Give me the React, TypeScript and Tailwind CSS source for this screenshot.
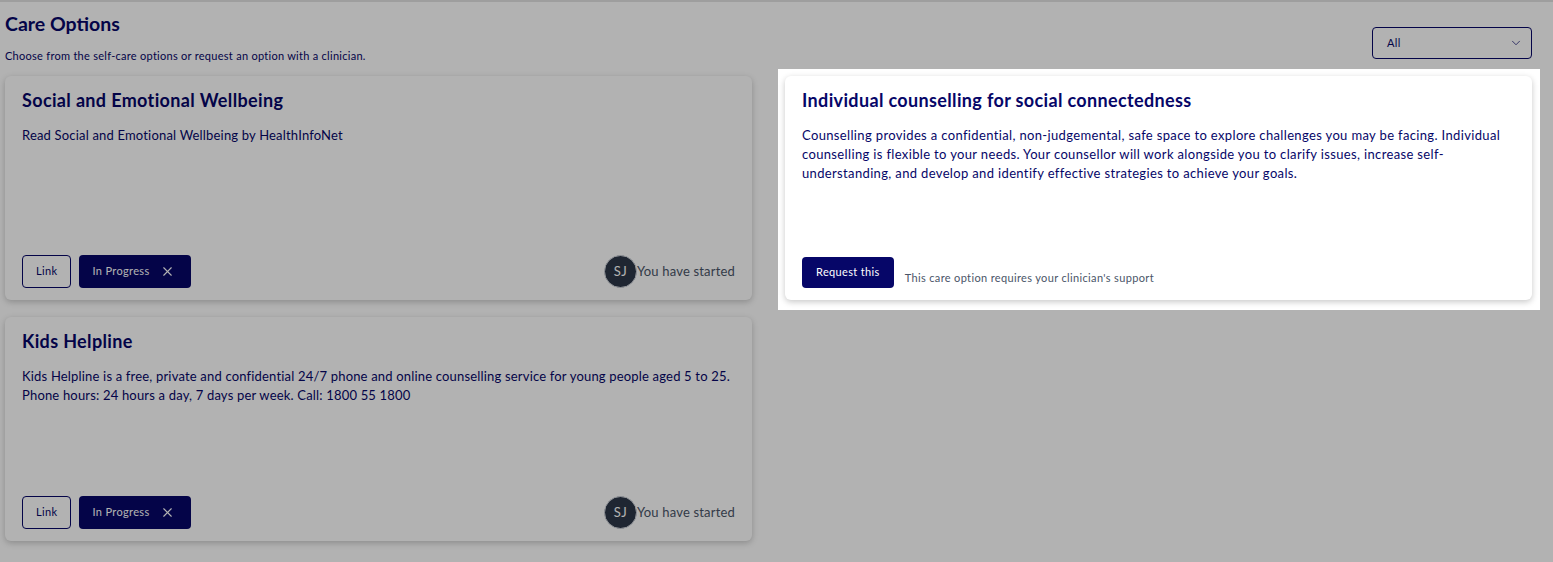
import { X, ChevronDown } from "lucide-react";

const NAVY = "text-[#060668]";

const StartedCard = ({ title, body }: { title: string; body: string[] }) => {
  return (
    <div className="bg-white rounded-md shadow-[0_2px_6px_rgba(0,0,0,0.22)] h-[224px] flex flex-col px-[17px] pt-[12px] pb-[12px]">
      <h2 className={`text-[18px] leading-[24px] font-bold ${NAVY}`}>{title}</h2>
      <div className={`mt-[14px] text-[13px] leading-[19px] tracking-[0.014em] ${NAVY}`}>
        {body.map((line) => (
          <p key={line}>{line}</p>
        ))}
      </div>
      <div className="mt-auto flex items-center justify-between">
        <div className="flex items-center gap-[8px]">
          <button className={`h-[33px] px-[13px] border border-[#060668] rounded text-[11px] ${NAVY}`}>
            Link
          </button>
          <button className="h-[33px] pl-[13px] pr-[16px] bg-[#060668] rounded text-[11px] text-white flex items-center gap-[10px]">
            In Progress
            <X size={15} strokeWidth={1.8} />
          </button>
        </div>
        <div className="flex items-center">
          <div className="w-[33px] h-[33px] rounded-full bg-[#2d3748] border border-gray-300 text-white text-[13px] flex items-center justify-center">
            SJ
          </div>
          <span className="text-[13px] tracking-[0.014em] text-[#4a5568]">You have started</span>
        </div>
      </div>
    </div>
  );
};

export default function App() {
  return (
    <div className="min-h-screen bg-white border-t-2 border-[#e2e2e2] font-['Lato','Open_Sans',sans-serif] tracking-[0.022em] pl-[5px] pr-[21px]">
      <div className="flex justify-between items-start">
        <div>
          <h1 className={`mt-[9px] text-[19.5px] leading-[26px] font-bold tracking-normal ${NAVY}`}>Care Options</h1>
          <p className={`mt-[12px] text-[11px] leading-[14px] tracking-[0.025em] ${NAVY}`}>
            Choose from the self-care options or request an option with a clinician.
          </p>
        </div>
        <div className="mt-[25px] w-[160px] h-[32px] border border-[#060668] rounded flex items-center justify-between pl-[14px] pr-[8px]">
          <span className={`text-[11px] ${NAVY}`}>All</span>
          <ChevronDown size={14} strokeWidth={1.2} className="text-[#060668]" />
        </div>
      </div>

      <div className="mt-[13px] grid grid-cols-2 gap-x-[33px] gap-y-[17px] items-start">
        <StartedCard
          title="Social and Emotional Wellbeing"
          body={["Read Social and Emotional Wellbeing by HealthInfoNet"]}
        />
        <div className="relative z-10 -mx-[7px] -mr-[8px] -mt-[7px] -mb-[10px] p-[7px] pr-[8px] pb-[10px] bg-white shadow-[0_0_0_9999px_rgba(0,0,0,0.3)]">
          <div className="bg-white rounded-md shadow-[0_2px_6px_rgba(0,0,0,0.22)] h-[224px] flex flex-col px-[17px] pt-[12px] pb-[12px]">
            <h2 className={`text-[18px] leading-[24px] font-bold ${NAVY}`}>
              Individual counselling for social connectedness
            </h2>
            <p className={`mt-[14px] text-[13px] leading-[19px] ${NAVY}`}>
              Counselling provides a confidential, non-judgemental, safe space to explore challenges you may be
              facing. Individual counselling is flexible to your needs. Your counsellor will work alongside you to
              clarify issues, increase self-understanding, and develop and identify effective strategies to achieve
              your goals.
            </p>
            <div className="mt-auto flex items-end">
              <button className="h-[31px] px-[14px] bg-[#060668] rounded text-[11px] text-white">Request this</button>
              <span className="ml-[11px] mb-[2px] text-[11px] text-[#4a5568]">
                This care option requires your clinician's support
              </span>
            </div>
          </div>
        </div>
        <StartedCard
          title="Kids Helpline"
          body={[
            "Kids Helpline is a free, private and confidential 24/7 phone and online counselling service for young people aged 5 to 25.",
            "Phone hours: 24 hours a day, 7 days per week. Call: 1800 55 1800",
          ]}
        />
      </div>
    </div>
  );
}
